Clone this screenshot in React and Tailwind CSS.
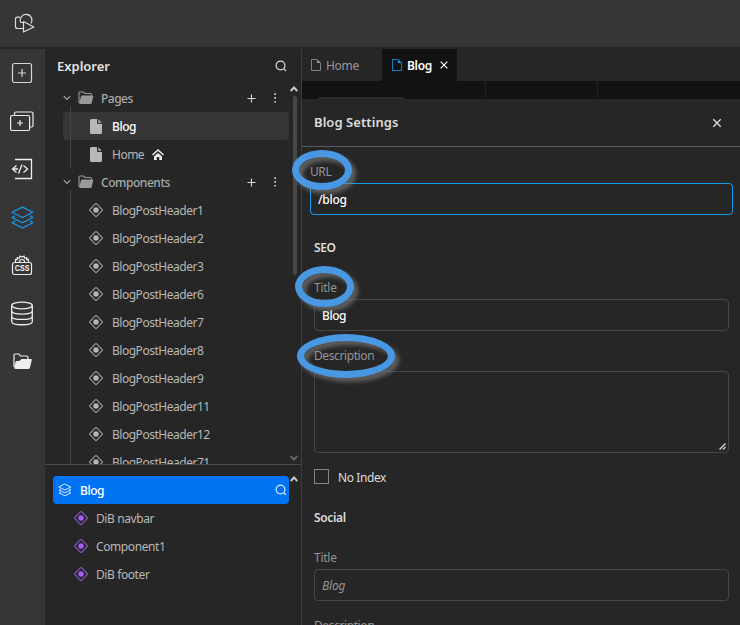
import React from "react";

const components = ["1", "2", "3", "6", "7", "8", "9", "11", "12", "71"];

function Diamond({ className }) {
  return (
    <svg width="16" height="16" viewBox="0 0 16 16" className={className}>
      <rect x="3.2" y="3.2" width="9.6" height="9.6" rx="1" transform="rotate(45 8 8)" fill="none" stroke="currentColor" strokeWidth="1.1" opacity="0.85" />
      <circle cx="8" cy="8" r="2.7" fill="currentColor" />
    </svg>
  );
}

function Layers({ size, weight }) {
  return (
    <svg width={size} height={size} viewBox="0 0 24 24" fill="none" stroke="currentColor" strokeWidth={weight} strokeLinejoin="round" strokeLinecap="round">
      <path d="M12 2 22 7 12 12 2 7Z" />
      <path d="M4.500 10.500 2 12l10 5 10-5-2.500-1.500" />
      <path d="M4.500 15.500 2 17l10 5 10-5-2.500-1.500" />
    </svg>
  );
}

function Folder() {
  return (
    <svg width="16" height="14" viewBox="0 0 16 14" className="shrink-0">
      <path d="M1 12V2Q1 1 2 1h3.500l1.500 1.500h5.500q1 0 1 1v1" fill="none" stroke="currentColor" strokeWidth="1.1" />
      <path d="M4.200 4.500h10.300q1 0 .7 1l-1.500 6.500q-.3 1-1.300 1H2q-1 0-.8-1L3 5.400q.3-.9 1.200-.9Z" fill="currentColor" />
    </svg>
  );
}

function PageIcon() {
  return (
    <svg width="12" height="15" viewBox="0 0 12 15" className="shrink-0 text-[#b8b8b8]">
      <path d="M1.500 0H7v4q0 1 1 1h4v8.500q0 1.500-1.500 1.500h-9Q0 15 0 13.500v-12Q0 0 1.500 0Z" fill="currentColor" />
      <path d="M8.300.3 11.700 3.700H8.300Z" fill="currentColor" />
    </svg>
  );
}

function TabFile() {
  return (
    <svg width="10" height="12" viewBox="0 0 10 12" className="shrink-0">
      <path d="M.5.5h5.500l3.500 3.500v7.500h-9Z" fill="none" stroke="currentColor" opacity="0.8" />
      <path d="M6 .5 9.500 4H6Z" fill="currentColor" />
    </svg>
  );
}

function Search({ className }) {
  return (
    <svg width="12" height="12" viewBox="0 0 12 12" fill="none" stroke="currentColor" strokeWidth="1.2" className={className}>
      <circle cx="5.5" cy="5.5" r="4.4" />
      <path d="m8.700 8.700 2.300 2.300" />
    </svg>
  );
}

function Close() {
  return (
    <svg width="10" height="10" viewBox="0 0 10 10" stroke="currentColor" strokeWidth="1.3">
      <path d="m1.300 1.300 7.400 7.400M8.700 1.300 1.300 8.700" />
    </svg>
  );
}

function Arrow({ className }) {
  return (
    <svg width="8" height="6" viewBox="0 0 8 6" fill="none" stroke="currentColor" strokeWidth="1.9" className={className}>
      <path d="M.7 5 4 1.500 7.300 5" />
    </svg>
  );
}

function Group({ name, className }) {
  return (
    <div className="flex h-7 items-center pl-[18px] pr-6 text-[#a9a9a9]">
      <svg width="8" height="6" viewBox="0 0 8 6" fill="none" stroke="currentColor" strokeWidth="1.1">
        <path d="m.8 1.200 3.200 3.200L7.200 1.200" />
      </svg>
      <span className="ml-[7px] text-[#999]"><Folder /></span>
      <span className={`ml-[7px] mt-[2px] grow font-medium ${className}`}>{name}</span>
      <svg width="9" height="9" viewBox="0 0 9 9" stroke="#ddd" strokeWidth="1.1">
        <path d="M4.500 .5v8M.5 4.500h8" />
      </svg>
      <svg width="3" height="10" viewBox="0 0 3 10" fill="#ccc" className="ml-[18px]">
        <path d="M.3.3h1.700v1.700H.3ZM.3 4.100h1.700v1.700H.3ZM.3 7.900h1.700v1.700H.3Z" />
      </svg>
    </div>
  );
}

function Ring({ className }) {
  return <div className={`pointer-events-none absolute rounded-[50%] border-[7px] border-[#4998e4] drop-shadow-[4px_4px_2px_rgba(135,135,135,0.6)] ${className}`} />;
}

function Rail() {
  return (
    <nav className="flex w-[45px] shrink-0 flex-col items-center bg-[#363636] text-[#eee]">
      <div className="flex h-12 w-full items-center justify-center pr-px">
        <svg width="22" height="22" viewBox="0 0 22 22" fill="none" stroke="#d5d5d5" strokeWidth="1.2">
          <rect x="1.5" y="1.5" width="19" height="19" rx="2" />
          <path d="M11 7v8M7 11h8" />
        </svg>
      </div>
      <div className="flex h-12 w-full items-center justify-center pr-px">
        <svg width="24" height="22" viewBox="0 0 24 22" fill="none" stroke="currentColor" strokeWidth="1.2">
          <rect x=".6" y="5.5" width="19" height="15" rx="1.5" />
          <path d="M4.500 5.500v-2q0-1.500 1.500-1.500h15.500q1.500 0 1.500 1.500v12q0 1.500-1.500 1.500h-2M10 10v6M7 13h6" />
        </svg>
      </div>
      <div className="flex h-12 w-full items-center justify-center pr-px">
        <svg width="22" height="22" viewBox="0 0 22 22" fill="none" stroke="currentColor" strokeWidth="1.3">
          <path d="M4 1.500h16.500v19H4" />
          <path d="M5.500 7.500 1.500 11l4 3.500M1.500 11H7M12.500 7.500l4 3.500-4 3.500M11 6.500 7.500 15.500" />
        </svg>
      </div>
      <div className="flex h-12 w-full items-center justify-center pr-px text-[#1598ec]"><Layers size={25} weight={1.2} /></div>
      <div className="flex h-12 w-full items-center justify-center pr-px">
        <svg width="22" height="22" viewBox="0 0 22 22" fill="none" stroke="currentColor" strokeWidth="1.2">
          <rect x="1.5" y="8.5" width="19" height="12" rx="2" />
          <path d="M4.500 8V5.500l2 .2-.3-2 2.200.4L9 2l2 1 2-1 .6 2.100 2.200-.4-.3 2 2-.2V8M8.500 8.500q-.2-3 2.500-3t2.500 3" />
          <text x="11" y="17.200" textAnchor="middle" fill="currentColor" stroke="none" fontSize="7.200" fontWeight="700" fontFamily="Inter, sans-serif">CSS</text>
        </svg>
      </div>
      <div className="flex h-12 w-full items-center justify-center pr-px">
        <svg width="24" height="25" viewBox="0 0 24 25" fill="none" stroke="currentColor" strokeWidth="1.3">
          <ellipse cx="12" cy="4.5" rx="10.3" ry="3.3" />
          <path d="M1.700 4.500v16c0 4.300 20.600 4.300 20.600 0v-16M1.700 9.800c0 4.300 20.600 4.300 20.600 0M1.700 15.200c0 4.300 20.600 4.300 20.600 0" />
        </svg>
      </div>
      <div className="flex h-12 w-full items-center justify-center pr-px">
        <svg width="19" height="17" viewBox="0 0 19 17">
          <path d="M1 14V2.200Q1 1 2.200 1H6l1.500 2h6q1.500 0 1.500 1.500V6" fill="none" stroke="currentColor" strokeWidth="1.2" />
          <path d="M8.500 6H18q1 0 .8 1L17 14.500q-.4 1.500-1.700 1.500H3q-2 0-1.700-1.500L2.500 9q.3-1 1.300-1h2.500Z" fill="currentColor" />
        </svg>
      </div>
    </nav>
  );
}

function Explorer() {
  return (
    <aside className="flex w-64 shrink-0 flex-col">
      <div className="flex h-[35px] items-center justify-between pl-3 pr-[14px]">
        <span className="-mt-[2px] text-[13px] font-semibold text-[#e4e4e4]">Explorer</span>
        <Search className="-mt-px text-[#ddd]" />
      </div>
      <div className="relative h-[381px] overflow-hidden border-b border-[#4a4a4a]">
        <Group name="Pages" className="tracking-[-0.5px]" />
        <div className="absolute left-[25px] top-[22px] h-[62px] w-px bg-[#444]" />
        <div className="ml-[18px] mr-3 flex h-7 items-center rounded bg-[#363636] pl-[27px] text-white">
          <PageIcon /><span className="ml-[10px] mt-[2px] font-medium tracking-[-0.45px]">Blog</span>
        </div>
        <div className="flex h-7 items-center pl-[45px] text-[#b8b8b8]">
          <PageIcon /><span className="ml-[10px] mt-[2px] tracking-[-0.5px]">Home</span>
          <svg width="12" height="11" viewBox="0 0 12 11" className="ml-2 text-[#eee]">
            <path d="M.5 6 6 1l5.500 5" fill="none" stroke="currentColor" strokeWidth="1.5" />
            <path d="M2 7.500 6 4l4 3.500V11H7.300V8H4.700v3H2Z" fill="currentColor" />
          </svg>
        </div>
        <Group name="Components" className="tracking-[-0.45px]" />
        <div className="absolute left-[25px] top-[106px] h-[275px] w-px bg-[#444]" />
        {components.map((n) => (
          <div key={n} className="flex h-7 items-center pl-[43px] text-[#b8b8b8]">
            <Diamond className="shrink-0" />
            <span className="ml-2 mt-[2px] tracking-[-0.48px]">BlogPostHeader{n}</span>
          </div>
        ))}
        <Arrow className="absolute left-[245px] top-[2px] text-[#ccc]" />
        <div className="absolute left-[248px] top-[12px] h-[179px] w-1 rounded bg-[#484848]" />
        <Arrow className="absolute left-[245px] top-[371px] rotate-180 text-[#666]" />
      </div>
      <div className="relative pt-[11px]">
        <div className="ml-2 mr-3 flex h-7 items-center rounded bg-[#0073f5] pl-[5px] pr-[2px] text-white">
          <Layers size={14} weight={1.4} />
          <span className="ml-2 mt-[2px] grow font-medium tracking-[-0.45px]">Blog</span>
          <Search className="text-[#cfe4ff]" />
        </div>
        <Arrow className="absolute left-[245px] top-[11px] text-[#ccc]" />
        {["DiB navbar", "Component1", "DiB footer"].map((n) => (
          <div key={n} className="flex h-7 items-center pl-7 text-[#b8b8b8]">
            <Diamond className="shrink-0 text-[#a75cf2]" />
            <span className="ml-[7px] mt-[2px] tracking-[-0.4px]">{n}</span>
          </div>
        ))}
      </div>
    </aside>
  );
}

function Settings() {
  return (
    <section className="flex h-[526px] flex-col bg-[#262626]">
      <div className="flex h-12 shrink-0 items-center justify-between border-b border-[#5a5a5a] pl-3 pr-[18px] text-[#ddd]">
        <span className="-mt-px text-[13px] font-semibold tracking-[0.06px]">Blog Settings</span><Close />
      </div>
      <div className="flex flex-col pl-3 pr-[11px] text-[#959595]">
        <div className="-ml-1 mt-[15px] h-[21px] leading-[20px] tracking-[-0.4px]">URL</div>
        <div className="-ml-1 -mr-1 flex h-8 items-center rounded border border-[#159bf0] px-[7px] pt-[2px] font-medium tracking-[-0.3px] text-white">/blog</div>
        <div className="mt-[23px] h-[18px] font-semibold leading-[20px] tracking-[-0.4px] text-[#ddd]">SEO</div>
        <div className="mt-[22px] h-[21px] leading-[20px] tracking-[-0.25px]">Title</div>
        <div className="flex h-8 items-center rounded border border-[#464646] px-[7px] pt-[2px] font-medium tracking-[-0.45px] text-white">Blog</div>
        <div className="mt-[15px] h-[25px] leading-[20px] tracking-[-0.4px]">Description</div>
        <div className="flex h-[82px] items-end justify-end rounded border border-[#464646] p-[2px]">
          <svg width="7" height="7" viewBox="0 0 7 7" stroke="#ccc" strokeWidth="1.5"><path d="M.5 6.500l6-6M4 6.500l2.500-2.500" /></svg>
        </div>
        <div className="mt-4 flex h-[16px] items-center text-[#ddd]">
          <div className="-mt-px h-[15px] w-[15px] border border-[#858585]" />
          <span className="ml-[9px] mt-px tracking-[-0.4px]">No Index</span>
        </div>
        <div className="mt-[24px] h-[18px] font-semibold leading-[18px] tracking-[-0.35px] text-[#ddd]">Social</div>
        <div className="mt-[22px] h-5 leading-[18px] tracking-[-0.25px]">Title</div>
        <div className="flex h-8 items-center rounded border border-[#464646] px-[7px] pt-[2px] italic tracking-[-0.2px]">Blog</div>
        <div className="mt-[15px] h-[9px] leading-[20px] tracking-[-0.4px]">Description</div>
      </div>
    </section>
  );
}

export default function App() {
  return (
    <div className="relative flex h-[625px] w-[740px] flex-col overflow-hidden bg-[#262626] font-['Noto_Sans','Open_Sans',sans-serif] text-[12px] leading-[18px]">
      <header className="mb-[2px] flex h-[47px] shrink-0 items-center rounded-tl-[3px] bg-[#363636] pl-[14px]">
        <svg width="21" height="20" viewBox="0 0 21 20" fill="none" stroke="#ddd" strokeWidth="1.2" strokeLinejoin="round" className="-mt-px">
          <path d="M6 4.200H3.300Q1.500 4.200 1.500 6.200v7.300q0 2 2 2h6M6.800 9.500A5.800 5.800 0 1 1 16.800 10.500M6.800 9.500h2.700" />
          <path d="M9.500 19V8.500L19.800 14Z" />
        </svg>
      </header>
      <div className="flex min-h-0 grow">
        <Rail />
        <Explorer />
        <main className="min-w-0 grow border-l border-[#3d3d3d]">
          <div className="flex h-8">
            <div className="flex w-20 items-center pl-[9px] text-[#999]"><TabFile /><span className="ml-[5px] mt-[2px] tracking-[-0.3px]">Home</span></div>
            <div className="flex w-[75px] items-center bg-[#121212] pl-[10px] text-white">
              <span className="text-[#159bf0]"><TabFile /></span>
              <span className="ml-[5px] mt-[2px] font-semibold tracking-[-0.3px]">Blog</span>
              <span className="ml-[7px] scale-90"><Close /></span>
            </div>
          </div>
          <div className="flex h-[18px] bg-[#121212]">
            <div className="flex w-[184px] items-end border-r border-[#202020]"><div className="ml-4 h-[2px] w-[86px] rounded-t bg-[#2b2b2b]" /></div>
            <div className="w-[112px] border-r border-[#202020]" />
          </div>
          <Settings />
        </main>
      </div>
      <Ring className="left-[292px] top-[150px] h-10 w-[60px]" />
      <Ring className="left-[295px] top-[266px] h-[41px] w-[59px]" />
      <Ring className="left-[297px] top-[334px] h-[44px] w-[98px]" />
    </div>
  );
}
